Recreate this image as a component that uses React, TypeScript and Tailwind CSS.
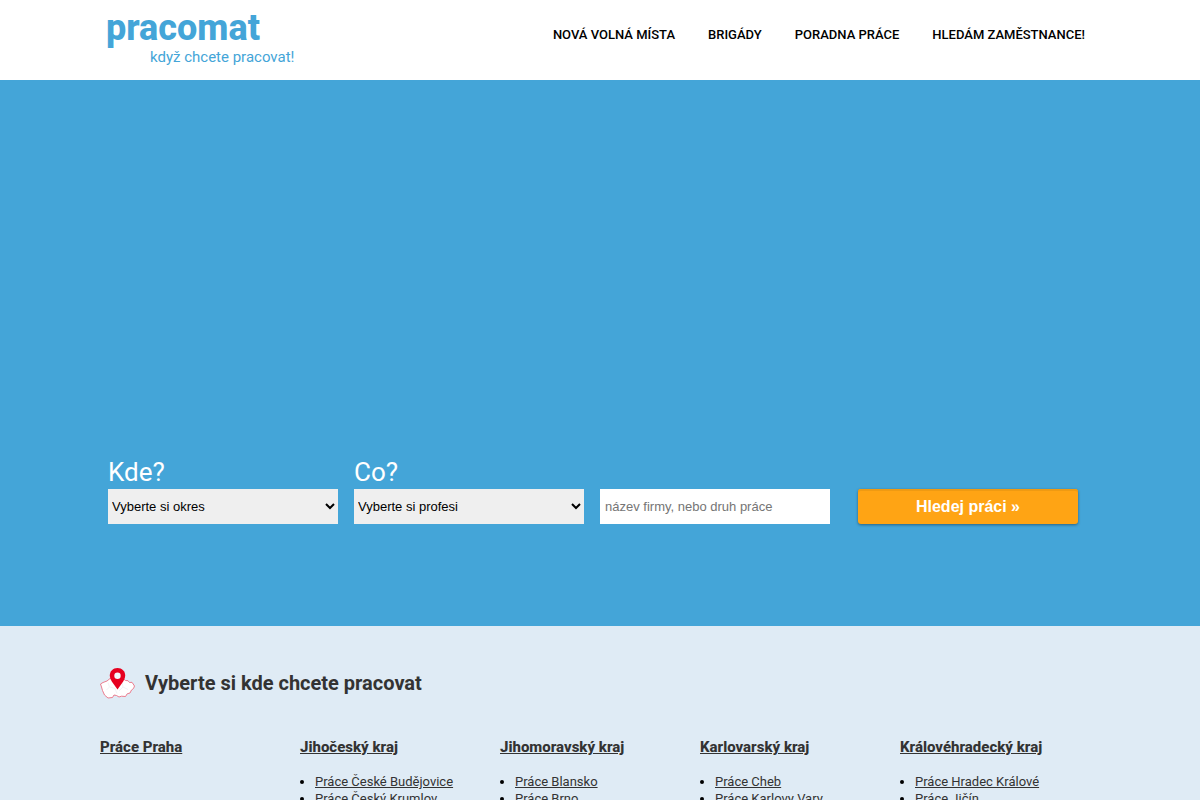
const navLinks = ['Nová volná místa', 'Brigády', 'Poradna práce', 'Hledám zaměstnance!'];

const regions = [
  { name: 'Práce Praha', districts: [] },
  { name: 'Jihočeský kraj', districts: ['Práce České Budějovice', 'Práce Český Krumlov'] },
  { name: 'Jihomoravský kraj', districts: ['Práce Blansko', 'Práce Brno'] },
  { name: 'Karlovarský kraj', districts: ['Práce Cheb', 'Práce Karlovy Vary'] },
  { name: 'Královéhradecký kraj', districts: ['Práce Hradec Králové', 'Práce Jičín'] },
];

function Header() {
  return (
    <header className="bg-white">
      <div className="max-w-[1000px] h-20 mx-auto flex justify-between">
        <a href="#" className="block pl-1.5 pt-[9px] text-[#44a5d8]">
          <span className="block text-4xl leading-[39px] font-extrabold">pracomat</span>
          <span className="block pl-11 text-[15px] leading-[18px]">když chcete pracovat!</span>
        </a>
        <nav className="flex gap-[33px] pt-[25px] pr-[15px]">
          {navLinks.map(link => (
            <a key={link} href="#" className="text-[13px] leading-5 font-medium uppercase whitespace-nowrap text-black">
              {link}
            </a>
          ))}
        </nav>
      </div>
    </header>
  );
}

function SearchForm() {
  const field = "block w-full h-[35px] text-[13px] font-['Liberation_Sans',sans-serif]";

  return (
    <section className="bg-[#44a5d8] pt-[374px] pb-[102px]">
      <form className="max-w-[1000px] mx-auto px-2 flex items-end gap-4">
        <div className="w-[230px]">
          <label htmlFor="okres" className="block pt-px text-[26px] leading-[34px] text-white">Kde?</label>
          <select id="okres" className={`${field} bg-[#efefef] text-black`}>
            <option>Vyberte si okres</option>
          </select>
        </div>
        <div className="w-[230px]">
          <label htmlFor="profese" className="block pt-px text-[26px] leading-[34px] text-white">Co?</label>
          <select id="profese" className={`${field} bg-[#efefef] text-black`}>
            <option>Vyberte si profesi</option>
          </select>
        </div>
        <div className="w-[230px]">
          <input
            type="text"
            aria-label="Název firmy, nebo druh práce"
            placeholder="název firmy, nebo druh práce"
            className={`${field} bg-white px-[5px] placeholder:text-[#757575]`}
          />
        </div>
        <button
          type="button"
          className="ml-3 w-[220px] h-[35px] rounded-[3px] bg-[#ffa414] text-base font-bold text-white font-['Liberation_Sans',sans-serif] shadow-[inset_0_2px_0_#ef9a12,0_1px_3px_rgba(0,0,0,0.4)]"
        >
          Hledej práci »
        </button>
      </form>
    </section>
  );
}

function MapIcon() {
  return (
    <svg className="w-[35px] h-[31px]" viewBox="0 0 35 31" aria-hidden="true">
      <path
        d="M.5 16 3 14.500l4-1.500 3-2.500 5 1 8-1 2.500 2 2.500.2 1.500 1.800 2.500-.2L34.500 18l-1 2.500-2 1.500-1.500 3-2.800.8-1.700 2.700-4-.3-2.500.8-2.500-1.500-2.500-.5-1.500 2.500-4.500.5-3.500-3L2.500 22.500 1.500 19z"
        fill="#fff"
        stroke="#ea6f83"
        strokeWidth=".9"
      />
      <path d="M8 14.500 9.500 19l-3 3M10 19l5 1.500 2 5M22 14l1 5 5 2.500M23 19l-4 4" fill="none" stroke="#ececf0" strokeWidth=".7" />
      <path d="M17.500 0C13 0 9.800 3.300 9.800 7.600c0 2.200.9 4.100 2 6l5.700 8 5.700-8c1.100-1.900 2-3.800 2-6C25.200 3.300 22 0 17.500 0z" fill="#e6001f" />
      <circle cx="17.500" cy="7.700" r="3.200" fill="#f3f7fb" />
    </svg>
  );
}

function Regions() {
  return (
    <section className="min-h-[174px] bg-[#dfebf5] pt-[42px]">
      <div className="max-w-[1000px] mx-auto text-[#333]">
        <div className="flex items-center gap-2.5">
          <MapIcon />
          <h2 className="text-xl leading-[31px] font-bold">Vyberte si kde chcete pracovat</h2>
        </div>
        <div className="grid grid-cols-5 mt-[38px]">
          {regions.map(region => (
            <div key={region.name}>
              <h3 className="text-[15px] leading-5 font-extrabold whitespace-nowrap">
                <a href="#" className="underline">{region.name}</a>
              </h3>
              <ul className="mt-4 pl-[15px] list-disc marker:text-black text-[13px] leading-[17px]">
                {region.districts.map(district => (
                  <li key={district}>
                    <a href="#" className="underline">{district}</a>
                  </li>
                ))}
              </ul>
            </div>
          ))}
        </div>
      </div>
    </section>
  );
}

export default function App() {
  return (
    <div className="font-['Roboto','Noto_Sans',sans-serif]">
      <Header />
      <main>
        <SearchForm />
        <Regions />
      </main>
    </div>
  );
}
